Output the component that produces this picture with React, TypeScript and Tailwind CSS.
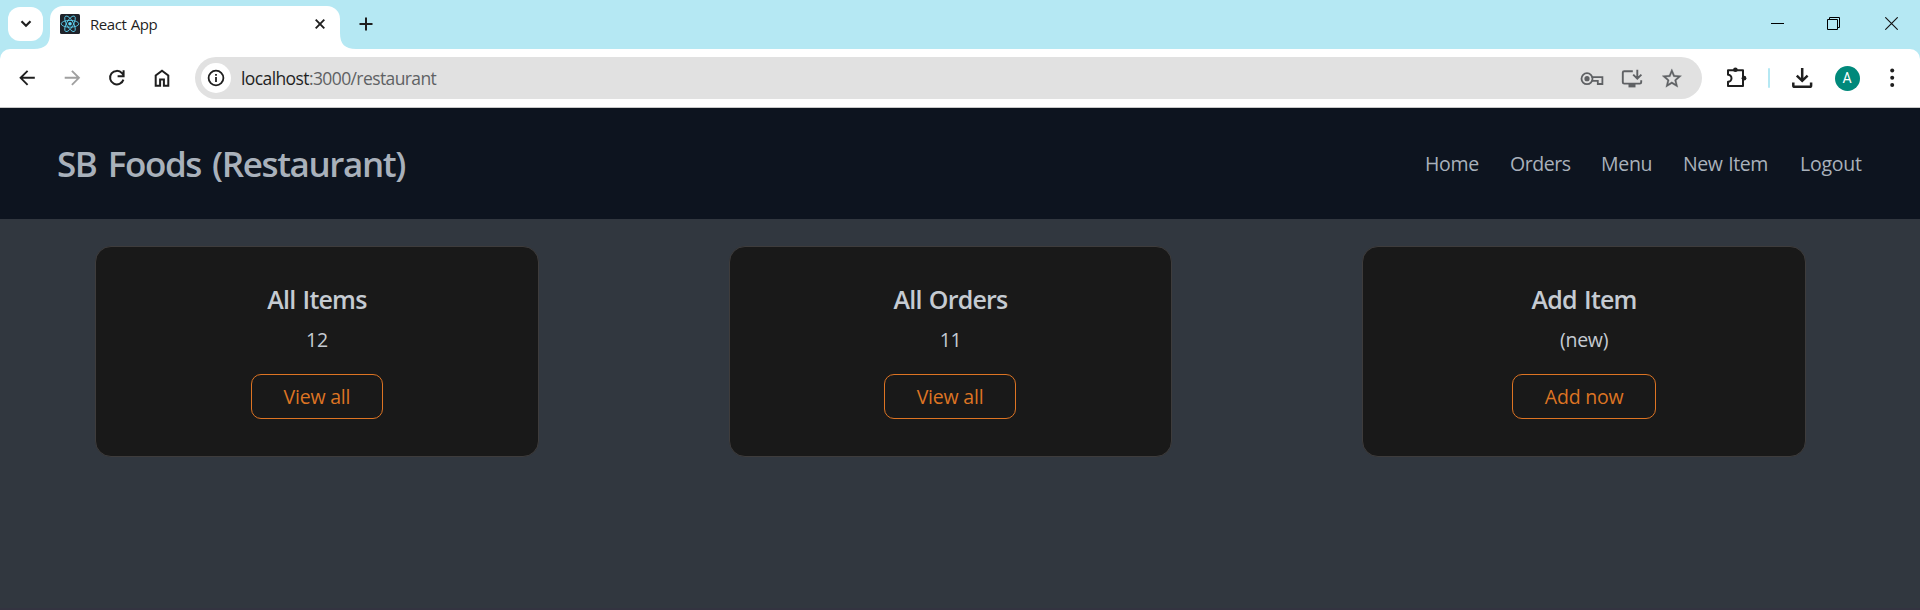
import React from "react";

function Label({ children, className = "" }: { children: React.ReactNode; className?: string }) {
  return <span className={"block whitespace-nowrap " + className}>{children}</span>;
}

function Icon({ children, className = "text-[#1f1f1f]", width = 2 }: { children: React.ReactNode; className?: string; width?: number }) {
  return (
    <svg className={"shrink-0 " + className} width="24" height="24" viewBox="0 0 24 24" fill="none" stroke="currentColor" strokeWidth={width}>
      {children}
    </svg>
  );
}

function ReactLogo() {
  return (
    <svg className="shrink-0" width="20" height="20" viewBox="0 0 20 20" fill="none">
      <rect width="20" height="20" rx="1.5" fill="#20232a" />
      <g stroke="#61dafb" strokeWidth="0.8">
        <ellipse cx="10" cy="9.8" rx="8.8" ry="3.4" />
        <ellipse cx="10" cy="9.8" rx="8.8" ry="3.4" transform="rotate(60 10 9.8)" />
        <ellipse cx="10" cy="9.8" rx="8.8" ry="3.4" transform="rotate(120 10 9.8)" />
      </g>
      <circle cx="10" cy="9.8" r="1.8" fill="#61dafb" />
    </svg>
  );
}

function TabStrip() {
  return (
    <div className="flex h-[49px]">
      <div className="ml-2 mt-[7px] flex h-[34px] w-[35px] shrink-0 items-center justify-center rounded-[12px] bg-white">
        <svg width="12" height="8" viewBox="0 0 12 8" fill="none" stroke="#1f1f1f" strokeWidth="2.2">
          <path d="M1.5 1.2 6 5.7l4.5-4.5" />
        </svg>
      </div>
      <svg className="-ml-[9px] mt-[33px] shrink-0" width="16" height="16" viewBox="0 0 16 16">
        <path d="M0 16C11 16 16 11 16 0v16z" fill="#fff" />
      </svg>
      <div className="mt-1.5 flex h-[43px] w-[290px] shrink-0 items-start rounded-t-[13px] bg-white pl-[10px] pt-2">
        <ReactLogo />
        <Label className="ml-[10px] w-[225px] text-[15px] leading-[21px] tracking-[-0.45px] [word-spacing:1px] text-[#1f1f1f]">React App</Label>
        <svg className="mt-[5px]" width="10" height="10" viewBox="0 0 10 10" stroke="#1f1f1f" strokeWidth="1.9">
          <path d="M.7.7l8.6 8.6M9.3.7.7 9.3" />
        </svg>
      </div>
      <svg className="mt-[33px] shrink-0" width="16" height="16" viewBox="0 0 16 16">
        <path d="M16 16C5 16 0 11 0 0v16z" fill="#fff" />
      </svg>
      <svg className="ml-[2.5px] mt-[17px] shrink-0" width="14" height="14" viewBox="0 0 14 14" stroke="#1f1f1f" strokeWidth="2">
        <path d="M7 .5v13M.5 7h13" />
      </svg>
      <div className="ml-auto mr-[22px] mt-[17px] flex gap-[43px]">
        <svg width="14" height="13" viewBox="0 0 14 13">
          <path d="M0 6h13v1H0z" fill="#000" />
        </svg>
        <svg className="ml-[-1px]" width="14" height="13" viewBox="0 0 14 13" fill="none" stroke="#000">
          <path d="M.5 2.5h10v10H.5zM2.5 2.5v-2h10v10h-2" />
        </svg>
        <svg className="ml-[1px]" width="13" height="13" viewBox="0 0 13 13" stroke="#111" strokeWidth="1.1">
          <path d="M.3.3l12.4 12.4M12.7.3.3 12.7" />
        </svg>
      </div>
    </div>
  );
}

function AddressBar() {
  return (
    <div className="ml-[21px] flex h-[42px] w-[1507px] shrink-0 items-center rounded-full bg-[#e1e1e1] pl-1.5 pr-[18px]">
      <div className="flex size-[30px] items-center justify-center rounded-full bg-white">
        <Icon>
          <circle cx="12" cy="12" r="7.4" strokeWidth="1.8" />
          <path d="M12 11v5M12 8v1.8" strokeWidth="1.8" />
        </Icon>
      </div>
      <Label className="ml-[10px] pt-px text-[17.5px] tracking-[-0.6px] text-[#5f6164]">
        <span className="text-[#1f1f1f]">localhost</span>:3000/restaurant
      </Label>
      <div className="ml-auto flex gap-4">
        <Icon className="text-[#5f6164]" width={1.8}>
          <circle cx="7" cy="12.7" r="5.5" />
          <circle cx="7" cy="12.7" r="2.6" fill="currentColor" stroke="none" />
          <path d="M11.5 11.2H22.4V18h-4.6v-3.2h-6.3" />
        </Icon>
        <Icon className="text-[#5f6164]" width={1.9}>
          <path d="M12.8 5.2H4.2Q2.8 5.2 2.8 6.6v9.6q0 1.4 1.4 1.4h15.6q1.4 0 1.4-1.4v-2M17.3 3.8v8.6M13.2 8.6l4.1 4.1 4.1-4.1" />
          <path d="M8.5 18h7v3.4h-7z" fill="currentColor" stroke="none" />
        </Icon>
        <Icon className="text-[#5f6164]">
          <path
            transform="translate(.2 .9) scale(.97)"
            fill="currentColor"
            stroke="currentColor"
            strokeWidth="0.3"
            d="M22 9.24l-7.19-.62L12 2 9.19 8.63 2 9.24l5.46 4.73L5.82 21 12 17.27 18.18 21l-1.63-7.03L22 9.24zM12 15.4l-3.76 2.27 1-4.28-3.32-2.88 4.38-.38L12 6.1l1.71 4.04 4.38.38-3.32 2.88 1 4.28L12 15.4z"
          />
        </Icon>
      </div>
    </div>
  );
}

function Toolbar() {
  return (
    <div className="flex h-[59px] items-center rounded-t-[10px] border-b border-[#c8c8c8] bg-white pl-[15px]">
      <div className="flex gap-[21px]">
        <Icon width={1.9}>
          <path d="M19.8 11.8H6.2M12.6 4.8l-7 7 7 7" />
        </Icon>
        <Icon className="text-[#a0a0a0]" width={1.9}>
          <path d="M4.7 11.8h13.6M11.9 4.8l7 7-7 7" />
        </Icon>
        <Icon>
          <path d="M18.4 13.6A6.8 6.8 0 1 1 17 7.2l1.6 2M18.6 4.2v6h-6" />
        </Icon>
        <Icon>
          <path d="M5.7 19.7V9.5L12 4.7l6.3 4.8v10.2h-4.4v-6.2h-3.8v6.2z" />
        </Icon>
      </div>
      <AddressBar />
      <div className="ml-[21.5px] flex items-center">
        <Icon>
          <path d="M4 4.3h15V20H4v-4.2a3.4 3.4 0 0 0 0-7z" strokeLinejoin="round" />
          <circle cx="11.4" cy="3.8" r="2.3" fill="currentColor" stroke="none" />
          <circle cx="20" cy="12.2" r="2.4" fill="currentColor" stroke="none" />
        </Icon>
        <div className="ml-5 h-5 w-0.5 rounded-full bg-[#b5e8f3]" />
        <Icon className="ml-5 text-[#1f1f1f]" width={2.5}>
          <path d="M12.2 2v12.5M6.8 9.6l5.4 5.2 5.4-5.2M3.3 16.4v3q0 1.4 1.4 1.4h15q1.4 0 1.4-1.4v-3" />
        </Icon>
        <div className="ml-[21px] flex size-[25px] items-center justify-center rounded-full bg-[#00897b] font-['Roboto',sans-serif] text-[14px] leading-none text-white">
          A
        </div>
        <svg className="ml-[28.5px]" width="8" height="24" viewBox="0 0 8 24" fill="#1f1f1f">
          <circle cx="4.2" cy="4.6" r="2" />
          <circle cx="4.2" cy="11.8" r="2" />
          <circle cx="4.2" cy="18.9" r="2" />
        </svg>
      </div>
    </div>
  );
}

const links = [
  { name: "Home", width: "w-[53px] tracking-[-0.3px]" },
  { name: "Orders", width: "w-[59px] tracking-[-0.45px]" },
  { name: "Menu", width: "w-[50px] tracking-[-0.3px]" },
  { name: "New Item", width: "w-[85px] tracking-[-0.4px] [word-spacing:1px]" },
  { name: "Logout", width: "w-[64px] tracking-[-0.25px]" },
];

const cards = [
  { title: "All Items", value: "12", action: "View all", button: "w-[132px]" },
  { title: "All Orders", value: "11", action: "View all", button: "w-[132px] mr-px" },
  { title: "Add Item", value: "(new)", action: "Add now", button: "w-[144px]" },
];

export default function App() {
  return (
    <div className="h-[610px] overflow-hidden border-b-2 border-[#333340] bg-[#31373f] font-['Open_Sans',sans-serif]">
      <div className="bg-[#b5e8f3]">
        <TabStrip />
        <Toolbar />
      </div>
      <header className="flex h-[111px] items-center justify-between bg-[#0d141f] pl-[57px] pr-14 text-[#a9b1bb]">
        <Label className="pt-0.5 text-[35px] font-semibold tracking-[-1.4px] [word-spacing:3.5px]">SB Foods (Restaurant)</Label>
        <nav className="flex gap-8 text-[19.5px]">
          {links.map((link) => (
            <Label key={link.name} className={link.width}>{link.name}</Label>
          ))}
        </nav>
      </header>
      <main className="flex gap-[190.3px] pl-[95.3px] pt-[27px]">
        {cards.map((card) => (
          <section
            key={card.title}
            className="flex h-[211px] w-[443.3px] shrink-0 flex-col items-center rounded-2xl border border-[#3e3c3c] bg-[#191919] pt-[33px] text-[#c5cbd2]"
          >
            <Label className="text-[25px] font-semibold leading-[38px] tracking-[-0.8px] [word-spacing:1.5px]">{card.title}</Label>
            <Label className="mt-2 text-[19.5px] leading-[28px] tracking-[-0.3px]">{card.value}</Label>
            <button className={"mt-5 h-[45px] rounded-[10px] border border-[#dd7423] pt-px text-[19.5px] leading-none tracking-[-0.2px] text-[#dd7423] " + card.button}>
              {card.action}
            </button>
          </section>
        ))}
      </main>
    </div>
  );
}
